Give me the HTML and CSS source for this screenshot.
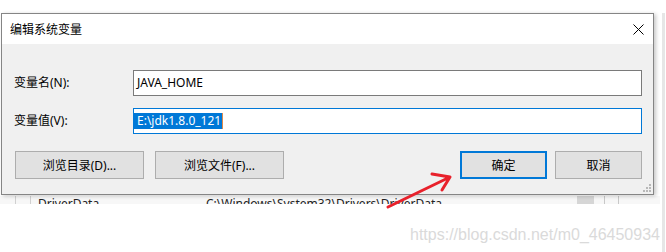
FILE: index.html
```html
<!DOCTYPE html>
<html lang="zh-CN">
<head>
  <meta charset="UTF-8">
  <title>编辑系统变量</title>
  <link rel="stylesheet" href="styles.css">
</head>
<body>
  <div class="screen">
    <div class="main">
      <div class="dialog">
        <div class="titlebar">
          <span class="title">编辑系统变量</span>
          <svg class="close" width="11" height="11" viewBox="0 0 11 11">
            <path d="M0.5 0.5 L10.5 10.5 M10.5 0.5 L0.5 10.5" stroke="#000" stroke-width="1" fill="none"/>
          </svg>
        </div>
        <div class="dialog-body">
          <div class="row">
            <span class="label">变量名(N):</span>
            <div class="field">JAVA_HOME</div>
          </div>
          <div class="row">
            <span class="label">变量值(V):</span>
            <div class="field focused"><span class="sel">E:\jdk1.8.0_121</span><span class="caret"></span></div>
          </div>
          <div class="buttons">
            <div class="btn-group">
              <button class="btn wide">浏览目录(D)...</button>
              <button class="btn wide">浏览文件(F)...</button>
            </div>
            <div class="btn-group narrow-gap">
              <button class="btn default">确定</button>
              <button class="btn">取消</button>
            </div>
          </div>
          <!-- resize grip in the corner -->
          <svg class="grip" width="10" height="10" viewBox="0 0 10 10">
            <rect x="7" y="1" width="2" height="2" fill="#b8b8b8"/>
            <rect x="4" y="4" width="2" height="2" fill="#b8b8b8"/>
            <rect x="7" y="4" width="2" height="2" fill="#b8b8b8"/>
            <rect x="1" y="7" width="2" height="2" fill="#b8b8b8"/>
            <rect x="4" y="7" width="2" height="2" fill="#b8b8b8"/>
            <rect x="7" y="7" width="2" height="2" fill="#b8b8b8"/>
          </svg>
        </div>
      </div>
      <div class="behind">
        <div class="cell c1"></div>
        <div class="cell c2"></div>
        <div class="cell name">DriverData</div>
        <div class="cell path">C:\Windows\System32\Drivers\DriverData</div>
        <div class="cell sb"></div>
        <div class="cell c3"></div>
        <div class="cell c4"></div>
        <div class="cell c5"></div>
      </div>
      <div class="watermark">https://blog.csdn.net/m0_46450934</div>
    </div>
    <div class="side"></div>
    <!-- red annotation arrow drawn over the screenshot -->
    <svg class="arrow" width="666" height="252" viewBox="0 0 666 252">
      <path d="M388 207 L450 177 M432 174 L450 177 L442 190" stroke="#e8212b" stroke-width="3" fill="none" stroke-linecap="round" stroke-linejoin="round"/>
    </svg>
  </div>
</body>
</html>
```

FILE: styles.css
```css
body {
  margin: 0;
  background: #fff;
  font-family: "Noto Sans", "Noto Sans CJK SC", sans-serif;
  font-size: 12px;
  color: #000;
}
.screen {
  position: relative;
  width: 666px;
  height: 252px;
  overflow: hidden;
  display: flex;
}
.main {
  width: 660px;
  padding-top: 13px;
}
.side {
  width: 3px;
  margin-top: 13px;
  margin-left: 2px;
  background: #e6e6e6;
}
.dialog {
  position: relative;
  width: 653px;
  margin-left: 1px;
  box-sizing: border-box;
  border: 1px solid #858585;
  box-shadow: 2px 1px 4px rgba(0, 0, 0, 0.22);
  background: #f0f0f0;
}
.titlebar {
  height: 30px;
  background: #fff;
  display: flex;
  align-items: center;
  justify-content: space-between;
  padding: 0 9px 0 8px;
}
.title {
  font-family: "Noto Sans CJK SC", sans-serif;
  font-size: 12px;
  line-height: 14px;
}
.close {
  display: block;
}
.dialog-body {
  position: relative;
  padding: 26px 11px 15px 12px;
}
.row {
  display: flex;
  align-items: center;
  margin-bottom: 12px;
}
.label {
  width: 119px;
  line-height: 14px;
}
.field {
  flex: 1;
  height: 26px;
  box-sizing: border-box;
  border: 1px solid #7a7a7a;
  background: #fff;
  padding-left: 3px;
  line-height: 24px;
  display: flex;
  align-items: center;
}
.field.focused {
  border-color: #0078d7;
  padding-left: 0;
}
.sel {
  background: #0078d7;
  color: #fff;
  line-height: 16px;
  padding: 0 1px 0 3px;
}
.caret {
  width: 1px;
  height: 16px;
  background: #e08a4a;
}
.buttons {
  display: flex;
  justify-content: space-between;
  margin-top: 17px;
  padding-left: 1px;
}
.btn-group {
  display: flex;
  gap: 11px;
}
.btn-group.narrow-gap {
  gap: 8px;
}
.btn {
  width: 87px;
  height: 28px;
  box-sizing: border-box;
  background: #e1e1e1;
  border: 1px solid #adadad;
  font-family: "Noto Sans", "Noto Sans CJK SC", sans-serif;
  font-size: 12px;
  color: #000;
  padding: 0;
}
.btn.wide {
  width: 129px;
}
.btn.default {
  border: 2px solid #0078d7;
}
.grip {
  position: absolute;
  right: 1px;
  bottom: 1px;
}
.behind {
  display: flex;
  height: 8px;
  overflow: hidden;
  background: #f7f7f7;
  margin-top: 1px;
  line-height: 14px;
  color: #222;
}
.cell {
  padding-top: 1px;
  white-space: nowrap;
}
.c1 {
  width: 15px;
  border-right: 1px solid #d0d0d0;
}
.c2 {
  width: 14px;
  border-right: 1px solid #d0d0d0;
}
.name {
  width: 168px;
  padding-left: 7px;
}
.path {
  width: 371px;
}
.sb {
  width: 17px;
  background: #d6d6d6;
}
.c3 {
  width: 10px;
  border-right: 1px solid #c8c8c8;
}
.c4 {
  width: 13px;
  border-right: 1px solid #c8c8c8;
}
.c5 {
  flex: 1;
}
.watermark {
  padding: 21px 0 0 410px;
  font-family: "Liberation Sans", Arial, sans-serif;
  font-size: 16px;
  line-height: 20px;
  color: #dadada;
  white-space: nowrap;
}
.arrow {
  position: absolute;
  left: 0;
  top: 0;
}
```
